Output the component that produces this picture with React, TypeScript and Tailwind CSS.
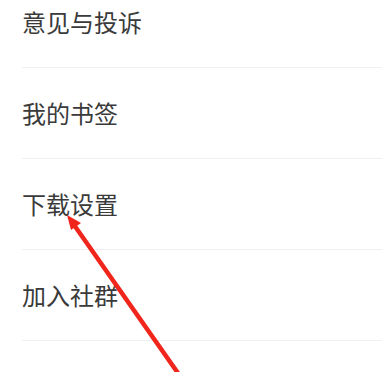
const items = ["意见与投诉", "我的书签", "下载设置", "加入社群"];

export default function App() {
  return (
    <div
      className="relative h-[372px] w-[382px] overflow-hidden bg-white"
      style={{ fontFamily: '"Noto Sans CJK SC", "Noto Sans", sans-serif' }}
    >
      <ul className="-mt-[23px]">
        {items.map((label) => (
          <li key={label} className="pl-[22px]">
            <div className="flex h-[91px] items-center border-b border-[#f0f0f0] text-[24px] leading-none text-[#3a3a3a]">
              {label}
            </div>
          </li>
        ))}
      </ul>

      {/* annotation arrow */}
      <svg
        className="pointer-events-none absolute left-0 top-0"
        width="382"
        height="372"
        viewBox="0 0 382 372"
      >
        <line x1="72" y1="222" x2="180" y2="376" stroke="#f0261c" strokeWidth="4.5" strokeLinecap="round" />
        <path d="M67 215 L81 223 L71 230 Z" fill="#f0261c" />
      </svg>
    </div>
  );
}
